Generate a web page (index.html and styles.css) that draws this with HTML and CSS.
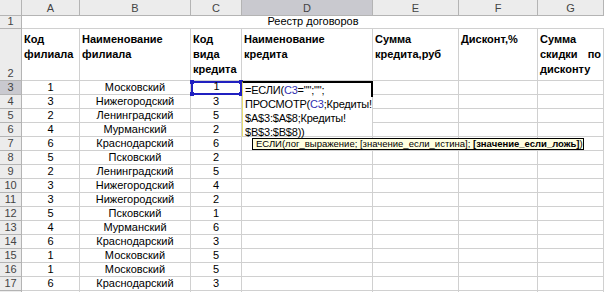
FILE: index.html
```html
<!DOCTYPE html>
<html>
<head>
<meta charset="utf-8">
<link rel="stylesheet" href="styles.css">
</head>
<body>
<div class="sheet">
  <div class="ch corner"></div>
  <div class="ch">A</div><div class="ch">B</div><div class="ch">C</div><div class="ch act">D</div><div class="ch">E</div><div class="ch">F</div><div class="ch">G</div>

  <div class="rh">1</div>
  <div class="c title">Реестр договоров</div>

  <div class="rh">2</div>
  <div class="c hd">Код филиала</div>
  <div class="c hd">Наименование филиала</div>
  <div class="c hd">Код вида кредита</div>
  <div class="c hd">Наименование кредита</div>
  <div class="c hd">Сумма кредита,руб</div>
  <div class="c hd">Дисконт,%</div>
  <div class="c hd just">Сумма скидки по дисконту</div>

  <div class="rh act">3</div><div class="c">1</div><div class="c">Московский</div><div class="c sel">1<i class="h tl"></i><i class="h bl"></i><i class="h tr"></i><i class="h br"></i></div>
  <div class="c edit"><div>=ЕСЛИ(<span class="ref">C3</span>="";"";</div><div>ПРОСМОТР(<span class="ref">C3</span>;Кредиты!</div><div>$A$3:$A$8;Кредиты!</div><div>$B$3:$B$8))</div></div>
  <div class="c"></div><div class="c"></div><div class="c"></div>

  <div class="rh">4</div><div class="c">3</div><div class="c">Нижегородский</div><div class="c">3</div><div class="c"></div><div class="c"></div><div class="c"></div>
  <div class="rh">5</div><div class="c">2</div><div class="c">Ленинградский</div><div class="c">5</div><div class="c"></div><div class="c"></div><div class="c"></div>
  <div class="rh">6</div><div class="c">4</div><div class="c">Мурманский</div><div class="c">2</div><div class="c"></div><div class="c"></div><div class="c"></div>
  <div class="rh">7</div><div class="c">6</div><div class="c">Краснодарский</div><div class="c">6</div><div class="c"></div><div class="c"></div><div class="c"></div><div class="c"></div>
  <div class="rh">8</div><div class="c">5</div><div class="c">Псковский</div><div class="c">2</div><div class="c"></div><div class="c"></div><div class="c"></div><div class="c"></div>
  <div class="rh">9</div><div class="c">2</div><div class="c">Ленинградский</div><div class="c">5</div><div class="c"></div><div class="c"></div><div class="c"></div><div class="c"></div>
  <div class="rh">10</div><div class="c">3</div><div class="c">Нижегородский</div><div class="c">4</div><div class="c"></div><div class="c"></div><div class="c"></div><div class="c"></div>
  <div class="rh">11</div><div class="c">3</div><div class="c">Нижегородский</div><div class="c">2</div><div class="c"></div><div class="c"></div><div class="c"></div><div class="c"></div>
  <div class="rh">12</div><div class="c">5</div><div class="c">Псковский</div><div class="c">1</div><div class="c"></div><div class="c"></div><div class="c"></div><div class="c"></div>
  <div class="rh">13</div><div class="c">4</div><div class="c">Мурманский</div><div class="c">6</div><div class="c"></div><div class="c"></div><div class="c"></div><div class="c"></div>
  <div class="rh">14</div><div class="c">6</div><div class="c">Краснодарский</div><div class="c">3</div><div class="c"></div><div class="c"></div><div class="c"></div><div class="c"></div>
  <div class="rh">15</div><div class="c">1</div><div class="c">Московский</div><div class="c">5</div><div class="c"></div><div class="c"></div><div class="c"></div><div class="c"></div>
  <div class="rh">16</div><div class="c">1</div><div class="c">Московский</div><div class="c">5</div><div class="c"></div><div class="c"></div><div class="c"></div><div class="c"></div>
  <div class="rh">17</div><div class="c">6</div><div class="c">Краснодарский</div><div class="c">3</div><div class="c"></div><div class="c"></div><div class="c"></div><div class="c"></div>
  <div class="rh"></div><div class="c"></div><div class="c"></div><div class="c"></div><div class="c"></div><div class="c"></div><div class="c"></div><div class="c"></div>

  <div class="tip">ЕСЛИ(лог_выражение; [значение_если_истина]; <b>[значение_если_ложь]</b>)</div>
</div>
</body>
</html>
```
FILE: styles.css
```css
html, body {
  margin: 0;
  padding: 0;
  background: #fff;
  overflow: hidden;
}
.sheet {
  position: relative;
  display: grid;
  grid-template-columns: 22px 58px 111px 51px 131px 86px 79px 66px;
  grid-template-rows: 16px 13px 52px repeat(16, 14px);
  width: 604px;
  height: 292px;
  overflow: hidden;
  font-family: "Liberation Sans", Arial, sans-serif;
  font-size: 11px;
  color: #000;
}
.ch, .rh {
  box-sizing: border-box;
  background: #ececec;
  color: #444;
  border-right: 1px solid #b4b4b4;
  border-bottom: 1px solid #b4b4b4;
  display: flex;
  align-items: center;
  justify-content: center;
  font-size: 11px;
}
.rh {
  align-items: flex-end;
  line-height: 13px;
}
.ch.act, .rh.act {
  background: #c9c9cf;
}
.c {
  box-sizing: border-box;
  border-right: 1px solid #d0d0d0;
  border-bottom: 1px solid #d0d0d0;
  display: flex;
  align-items: flex-end;
  justify-content: center;
  line-height: 13px;
  white-space: nowrap;
}
.title {
  grid-column: span 7;
  border-right: none;
}
.hd {
  font-weight: bold;
  white-space: normal;
  align-items: flex-start;
  justify-content: flex-start;
  padding: 3px 2px 0 2px;
  line-height: 15px;
}
.just {
  text-align: justify;
}
.sel {
  position: relative;
  border: 2px solid #2020c0;
}
.h {
  position: absolute;
  width: 4px;
  height: 4px;
  background: #2020c0;
}
.tl { left: -3px; top: -3px; }
.bl { left: -3px; bottom: -3px; }
.tr { right: -3px; top: -3px; }
.br { right: -3px; bottom: -3px; }
.edit {
  grid-row: span 4;
  position: relative;
  display: block;
  border-top: 2px solid #000;
  background: #fff;
  padding: 0 0 0 2px;
  line-height: 14px;
  border-left: 1px solid #e8e070;
  letter-spacing: -0.2px;
}
.edit::after {
  content: "";
  position: absolute;
  right: -1px;
  top: -2px;
  width: 2px;
  height: 16px;
  background: #000;
}
.ref {
  color: #3030b0;
}
.tip {
  position: absolute;
  left: 252px;
  top: 138px;
  width: 332px;
  height: 12px;
  box-sizing: border-box;
  background: #ffffe1;
  border: 1px solid #000;
  font-size: 9.5px;
  line-height: 10px;
  padding: 0 3px;
  white-space: nowrap;
}
```
